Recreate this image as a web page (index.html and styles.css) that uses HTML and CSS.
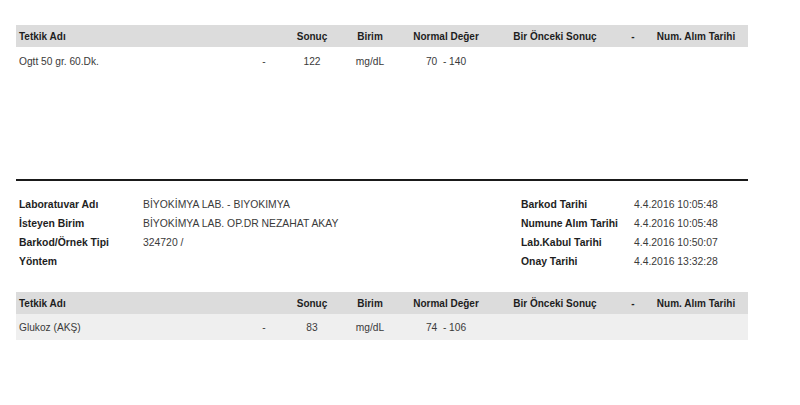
FILE: index.html
```html
<!DOCTYPE html>
<html lang="tr">
<head>
<meta charset="utf-8">
<link rel="stylesheet" href="styles.css">
</head>
<body>
<div class="page">
  <table class="results first">
    <colgroup>
      <col class="c-name"><col class="c-dash"><col class="c-res"><col class="c-unit"><col class="c-norm"><col class="c-prev"><col class="c-dash2"><col class="c-date">
    </colgroup>
    <thead>
      <tr>
        <th class="left">Tetkik Adı</th><th></th><th>Sonuç</th><th>Birim</th><th>Normal Değer</th><th>Bir Önceki Sonuç</th><th>-</th><th>Num. Alım Tarihi</th>
      </tr>
    </thead>
    <tbody>
      <tr class="plain">
        <td class="left">Ogtt 50 gr. 60.Dk.</td><td>-</td><td>122</td><td>mg/dL</td><td>70&nbsp; - 140</td><td></td><td></td><td></td>
      </tr>
    </tbody>
  </table>

  <div class="rule"></div>

  <div class="info">
    <div class="lbl">Laboratuvar Adı</div><div class="val">BİYOKİMYA LAB. - BIYOKIMYA</div>
    <div class="lbl">Barkod Tarihi</div><div class="val">4.4.2016 10:05:48</div>
    <div class="lbl">İsteyen Birim</div><div class="val">BİYOKİMYA LAB. OP.DR NEZAHAT AKAY</div>
    <div class="lbl">Numune Alım Tarihi</div><div class="val">4.4.2016 10:05:48</div>
    <div class="lbl">Barkod/Örnek Tipi</div><div class="val">324720 /</div>
    <div class="lbl">Lab.Kabul Tarihi</div><div class="val">4.4.2016 10:50:07</div>
    <div class="lbl">Yöntem</div><div class="val"></div>
    <div class="lbl">Onay Tarihi</div><div class="val">4.4.2016 13:32:28</div>
  </div>

  <table class="results second">
    <colgroup>
      <col class="c-name"><col class="c-dash"><col class="c-res"><col class="c-unit"><col class="c-norm"><col class="c-prev"><col class="c-dash2"><col class="c-date">
    </colgroup>
    <thead>
      <tr>
        <th class="left">Tetkik Adı</th><th></th><th>Sonuç</th><th>Birim</th><th>Normal Değer</th><th>Bir Önceki Sonuç</th><th>-</th><th>Num. Alım Tarihi</th>
      </tr>
    </thead>
    <tbody>
      <tr class="shaded">
        <td class="left">Glukoz (AKŞ)</td><td>-</td><td>83</td><td>mg/dL</td><td>74&nbsp; - 106</td><td></td><td></td><td></td>
      </tr>
    </tbody>
  </table>
</div>
</body>
</html>
```

FILE: styles.css
```css
html, body {
  margin: 0;
  padding: 0;
  background: #ffffff;
}
body {
  font-family: "Liberation Sans", Arial, sans-serif;
  font-size: 10px;
  color: #333333;
}
.page {
  width: 732px;
  padding: 25px 0 0 16px;
}
.results {
  width: 732px;
  border-collapse: collapse;
  table-layout: fixed;
}
.c-name { width: 224px; }
.c-dash { width: 48px; }
.c-res { width: 48px; }
.c-unit { width: 68px; }
.c-norm { width: 84px; }
.c-prev { width: 134px; }
.c-dash2 { width: 22px; }
.c-date { width: 104px; }
.results th {
  background: #dcdcdc;
  color: #1e1e1e;
  font-weight: bold;
  height: 22px;
  padding: 0;
  text-align: center;
  white-space: nowrap;
}
.results td {
  height: 26px;
  padding: 0;
  text-align: center;
  white-space: nowrap;
  color: #3a3a3a;
  font-size: 10.2px;
}
.results .left {
  text-align: left;
  padding-left: 3px;
}
.results tr.shaded td {
  background: #efefef;
}
.first tbody td {
  height: 28px;
}
.rule {
  height: 2px;
  background: #1a1a1a;
  margin-top: 104px;
}
.info {
  display: grid;
  grid-template-columns: 124px 378px 113px 1fr;
  grid-auto-rows: 19px;
  align-items: center;
  padding: 14px 0 0 3px;
  margin-bottom: 21px;
  font-size: 10.4px;
}
.info .lbl {
  font-weight: bold;
  color: #1e1e1e;
}
.info .val {
  color: #3a3a3a;
}
```
